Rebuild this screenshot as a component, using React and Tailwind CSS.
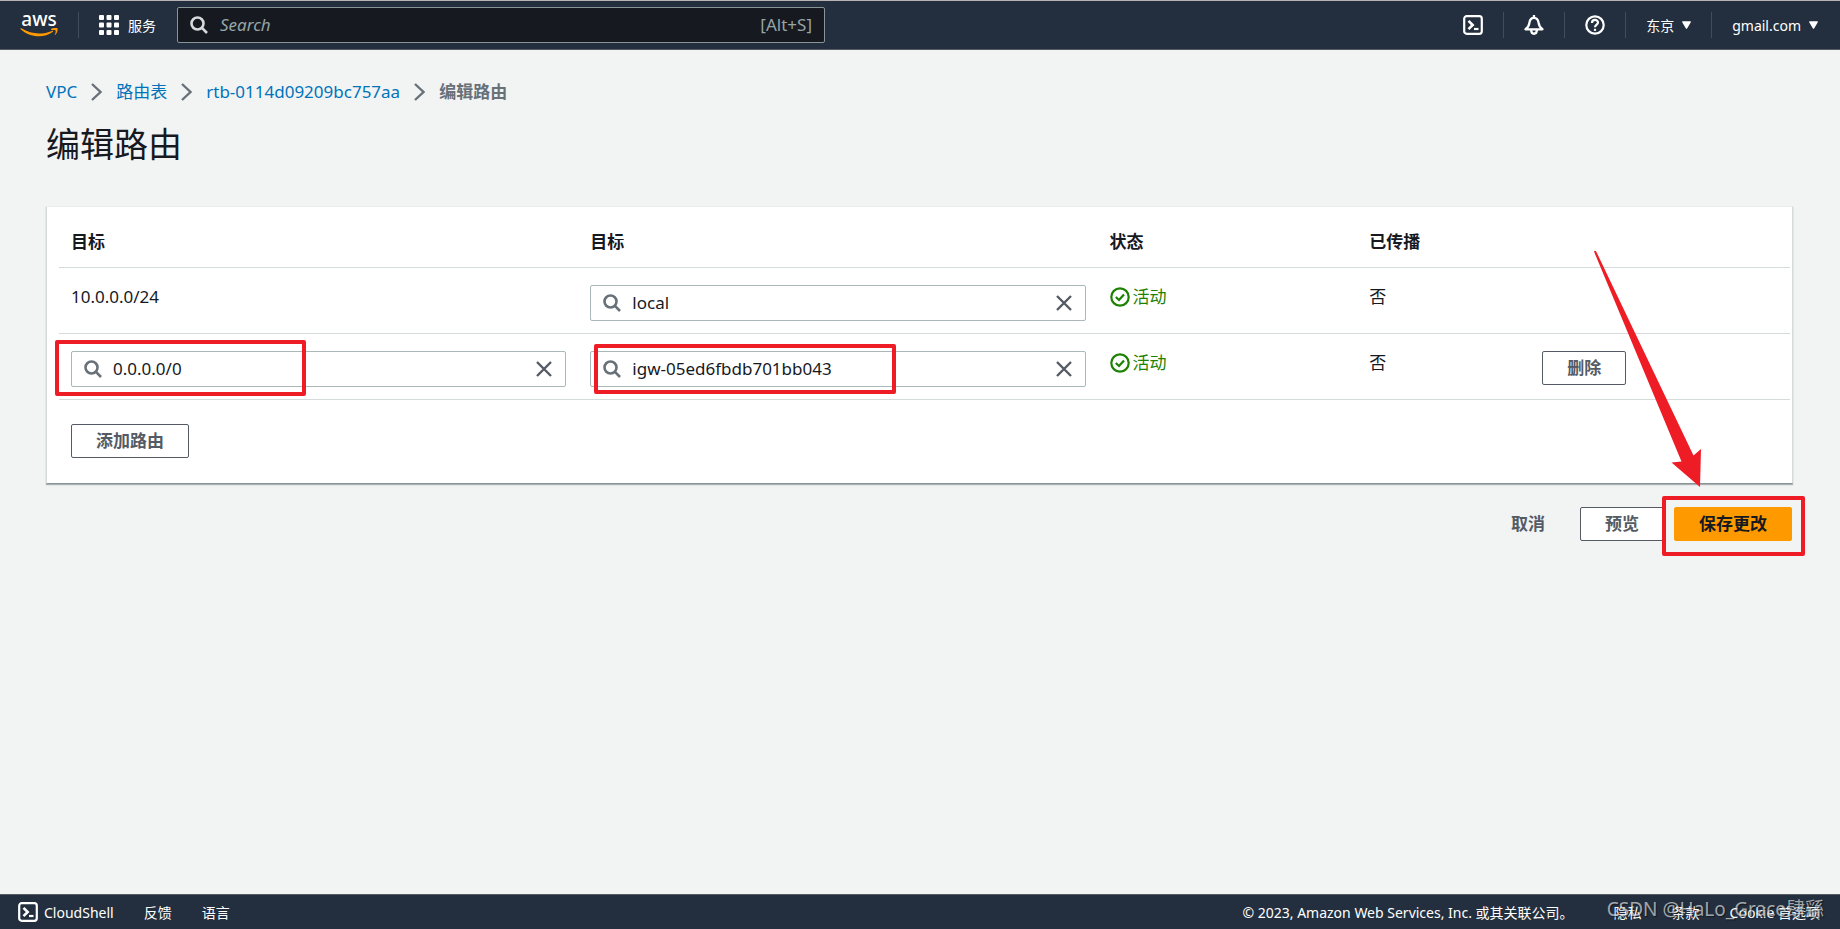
import { useState } from "react";

const fontStack = 'font-["Noto_Sans","Noto_Sans_CJK_SC",sans-serif]';

const AwsLogo = () => (
  <span className="flex w-[38px] flex-col items-center pb-[3px]">
    <span className="text-[19px] font-medium leading-[17px] text-white">aws</span>
    <svg className="h-[9px] w-[38px]" viewBox="0 0 38 9" fill="#ff9900" aria-hidden="true">
      <path d="M.5 .6C.8 .2 1.2 .3 1.7 .6C7 3.8 13 5.5 18.8 5.500C23.500 5.500 28 4.500 32 2.900C32.900 2.500 33.500 3.400 32.700 4C29 6.800 23.800 8.300 19 8.300C12 8.300 5.500 5.800 .6 1.300C.3 1 .3 .8 .5 .6Z" />
      <path d="M31 1C32.500 0 36.900 -.3 37.500 .5C38.100 1.300 37.200 5.300 35.200 7C34.900 7.200 34.600 7.100 34.800 6.700C35.300 5.600 36 3.200 35.600 2.500C35.100 1.800 32.600 1.900 31.400 2C31 2 30.900 1.500 31 1Z" />
    </svg>
  </span>
);

const GridIcon = () => (
  <svg className="size-5" viewBox="0 0 20 20" fill="white" aria-hidden="true">
    {[0, 7.5, 15].map((y) =>
      [0, 7.5, 15].map((x) => <rect key={`${x}-${y}`} x={x} y={y} width="5" height="5" rx="1" />)
    )}
  </svg>
);

const SearchIcon = ({ className = "text-[#687078]" }) => (
  <svg className={`size-[18px] shrink-0 ${className}`} viewBox="0 0 18 18" fill="none" stroke="currentColor" strokeWidth="2.6" aria-hidden="true">
    <circle cx="7.5" cy="7.5" r="6" />
    <path d="M11.700 11.700L17 17" />
  </svg>
);

const ShellIcon = () => (
  <svg className="size-5 shrink-0" viewBox="0 0 20 20" fill="none" stroke="white" strokeWidth="2.2" aria-hidden="true">
    <rect x="1.2" y="1.2" width="17.6" height="17.6" rx="2.5" />
    <path d="M5.500 5.800L9.700 10L5.500 14.200" strokeWidth="2.6" />
    <path d="M11 14H15.500" />
  </svg>
);

const BellIcon = () => (
  <svg className="size-5" viewBox="0 0 20 20" fill="none" stroke="white" strokeWidth="2.3" strokeLinejoin="round" aria-hidden="true">
    <path d="M10 0V3" />
    <path d="M1.500 14.300H18.500C16 12.500 15 11 14.600 7.800C14.200 4.800 12.500 2.800 10 2.800C7.500 2.800 5.800 4.800 5.400 7.800C5 11 4 12.500 1.500 14.300Z" />
    <path d="M7.200 15C7.200 20 12.800 20 12.800 15" />
  </svg>
);

const HelpIcon = () => (
  <svg className="size-5" viewBox="0 0 20 20" fill="none" stroke="white" strokeWidth="2.2" aria-hidden="true">
    <circle cx="10" cy="10" r="8.7" />
    <path d="M7 7.900C7 4 13 4 13 7.500C13 9.600 10 9.500 10 12.300" />
    <path d="M10 13.800V15.900" />
  </svg>
);

const Caret = () => (
  <svg className="h-[8px] w-[9px]" viewBox="0 0 9 8" fill="white" aria-hidden="true">
    <path d="M.8 .3H8.200C8.900 .3 9.100 .8 8.800 1.300L5.100 7.400C4.800 7.900 4.200 7.900 3.900 7.400L.2 1.300C-.1 .8 .1 .3 .8 .3Z" />
  </svg>
);

const Chevron = () => (
  <svg className="h-[18px] w-[11px]" viewBox="0 0 11 18" fill="none" stroke="#687078" strokeWidth="2.4" aria-hidden="true">
    <path d="M1 1L9.500 9L1 17" />
  </svg>
);

const Divider = () => <span className="h-[26px] w-px bg-[#414d5c]" />;

const Button = ({ variant = "normal", children }) => {
  const variants = {
    normal: "border-[#545b64] bg-white text-[#545b64]",
    link: "border-transparent text-[#545b64]",
    primary: "border-[#ff9900] bg-[#ff9900] text-[#16191f]",
  };
  return (
    <button
      type="button"
      className={`flex h-[34px] cursor-pointer items-center rounded-[2px] border px-6 text-[17px] font-bold leading-6 ${variants[variant]}`}
    >
      {children}
    </button>
  );
};

const SearchField = ({ label, initial }) => {
  const [value, setValue] = useState(initial);
  return (
    <div className="flex h-9 items-center rounded-[2px] border border-[#aab7b8] bg-white pl-3 pr-[13px]">
      <SearchIcon />
      <input
        type="text"
        aria-label={label}
        value={value}
        onChange={(e) => setValue(e.target.value)}
        className="ml-[11px] min-w-0 flex-1 bg-transparent text-[17px] leading-6 outline-none"
      />
      <button type="button" aria-label="清除" onClick={() => setValue("")} className="cursor-pointer">
        <svg className="size-4" viewBox="0 0 16 16" fill="none" stroke="#545b64" strokeWidth="2.4" aria-hidden="true">
          <path d="M1 1L15 15M15 1L1 15" />
        </svg>
      </button>
    </div>
  );
};

const Status = () => (
  <span className="flex items-center gap-[3px] text-[#1d8102]">
    <svg className="size-5" viewBox="0 0 20 20" fill="none" stroke="currentColor" strokeWidth="2.2" aria-hidden="true">
      <circle cx="10" cy="10" r="8.7" />
      <path d="M5.800 10L9 13L14 7.500" />
    </svg>
    活动
  </span>
);

const routes = [
  { cidr: "10.0.0.0/24", target: "local", fixed: true },
  { cidr: "0.0.0.0/0", target: "igw-05ed6fbdb701bb043", fixed: false },
];

const Header = () => (
  <header className="flex h-[50px] items-center border-b border-t border-b-[#545b64] border-t-[#b9b4b4] bg-[#232f3e] text-[14px] text-white">
    <a href="#" aria-label="aws" className="ml-5">
      <AwsLogo />
    </a>
    <span className="ml-5 flex">
      <Divider />
    </span>
    <button type="button" className="ml-5 flex cursor-pointer items-center gap-[9px]">
      <GridIcon />
      服务
    </button>
    <label className="ml-[21px] flex h-9 w-[648px] items-center rounded-[2px] border border-[#879596] bg-[#16191f] px-3">
      <SearchIcon className="text-[#d5dbdb]" />
      <input
        type="text"
        placeholder="Search"
        className="ml-3 min-w-0 flex-1 bg-transparent text-[17px] outline-none placeholder:italic placeholder:text-[#95a5a6]"
      />
      <span className="text-[17px] text-[#95a5a6]">[Alt+S]</span>
    </label>
    <nav className="ml-auto flex items-center gap-5 pr-[22px]">
      <button type="button" aria-label="CloudShell" className="cursor-pointer">
        <ShellIcon />
      </button>
      <Divider />
      <button type="button" aria-label="通知" className="cursor-pointer">
        <BellIcon />
      </button>
      <Divider />
      <button type="button" aria-label="帮助" className="cursor-pointer">
        <HelpIcon />
      </button>
      <Divider />
      <button type="button" className="flex cursor-pointer items-center gap-2">
        东京
        <Caret />
      </button>
      <Divider />
      <button type="button" className="flex cursor-pointer items-center gap-2">
        gmail.com
        <Caret />
      </button>
    </nav>
  </header>
);

const Breadcrumbs = () => (
  <nav className="flex items-center gap-[14px] text-[17px] leading-6 text-[#0073bb]">
    <a href="#">VPC</a>
    <Chevron />
    <a href="#">路由表</a>
    <Chevron />
    <a href="#">rtb-0114d09209bc757aa</a>
    <Chevron />
    <span className="font-bold text-[#687078]">编辑路由</span>
  </nav>
);

const RouteTable = () => (
  <section className="relative mt-10 border border-b-[#879596] border-l-[#d5dbdb] border-r-[#d5dbdb] border-t-[#eaeded] bg-white pb-[25px] pl-3 pr-[2px] shadow-[0_1px_1px_rgba(0,28,36,0.3)]">
    <table className="w-full table-fixed text-left text-[17px] leading-6">
      <thead>
        <tr className="border-b border-[#d5dbdb]">
          <th className="w-[30%] px-3 pb-[13px] pt-[23px]">目标</th>
          <th className="w-[30%] px-3 pb-[13px] pt-[23px]">目标</th>
          <th className="w-[15%] px-3 pb-[13px] pt-[23px]">状态</th>
          <th className="w-[10%] px-3 pb-[13px] pt-[23px]">已传播</th>
          <th className="w-[15%] px-3" aria-label="操作" />
        </tr>
      </thead>
      <tbody>
        {routes.map((route) => (
          <tr key={route.cidr} className="border-b border-[#d5dbdb] align-top">
            <td className="px-3 pb-3 pt-[17px]">
              {route.fixed ? route.cidr : <SearchField label="目标 CIDR" initial={route.cidr} />}
            </td>
            <td className="px-3 pb-3 pt-[17px]">
              <SearchField label="目标网关" initial={route.target} />
            </td>
            <td className="px-3 pb-3 pt-[17px]">
              <Status />
            </td>
            <td className="px-3 pb-3 pt-[17px]">否</td>
            <td className="px-3 pb-3 pt-[17px]">{!route.fixed && <Button>删除</Button>}</td>
          </tr>
        ))}
      </tbody>
    </table>
    <div className="mt-6 flex px-3">
      <Button>添加路由</Button>
    </div>

    {/* highlights around the new route */}
    <span className="pointer-events-none absolute left-[8px] top-[133px] h-[56px] w-[251px] rounded-[2px] border-4 border-[#ee1c25]" />
    <span className="pointer-events-none absolute left-[547px] top-[137px] h-[50px] w-[302px] rounded-[2px] border-4 border-[#ee1c25]" />
  </section>
);

const Actions = () => (
  <div className="relative mt-[23px] flex justify-end gap-[10px] pr-px">
    <Button variant="link">取消</Button>
    <Button>预览</Button>
    <Button variant="primary">保存更改</Button>
    <span className="pointer-events-none absolute -right-3 -top-[11px] h-[60px] w-[143px] rounded-[2px] border-4 border-[#ee1c25]" />
    <svg
      className="pointer-events-none absolute bottom-[53px] right-[91px] h-[240px] w-[110px]"
      viewBox="0 0 110 240"
      fill="#ee1c25"
      aria-hidden="true"
    >
      <path d="M2 3.500Q3 2.200 4.200 3.500L101.500 207.500L109 201L108 239L79.500 214.500L89.500 213.500Z" />
    </svg>
  </div>
);

const Footer = () => (
  <footer className="relative flex h-[35px] items-center border-t border-[#545b64] bg-[#232f3e] pl-[18px] pr-5 text-[14px] text-white">
    <a href="#" className="flex items-center gap-[6px]">
      <ShellIcon />
      CloudShell
    </a>
    <a href="#" className="ml-[30px]">反馈</a>
    <a href="#" className="ml-[30px]">语言</a>
    <p className="ml-auto">© 2023, Amazon Web Services, Inc. 或其关联公司。</p>
    <a href="#" className="ml-10">隐私</a>
    <a href="#" className="ml-[30px]">条款</a>
    <a href="#" className="ml-[30px]">Cookie 首选项</a>
    <span className="pointer-events-none absolute right-4 top-[2px] text-[19px] leading-6 text-white/60 [text-shadow:1px_1px_1px_rgba(0,0,0,0.5)]">
      CSDN @HaLo_Grace肆繇
    </span>
  </footer>
);

export default function App() {
  return (
    <div lang="zh-CN" className={`flex min-h-screen flex-col bg-[#f2f3f3] text-[#16191f] ${fontStack}`}>
      <Header />
      <main className="flex-1 pl-[46px] pr-[47px] pt-[30px]">
        <Breadcrumbs />
        <h1 className="mt-[18px] text-[34px] leading-[44px]">编辑路由</h1>
        <RouteTable />
        <Actions />
      </main>
      <Footer />
    </div>
  );
}
